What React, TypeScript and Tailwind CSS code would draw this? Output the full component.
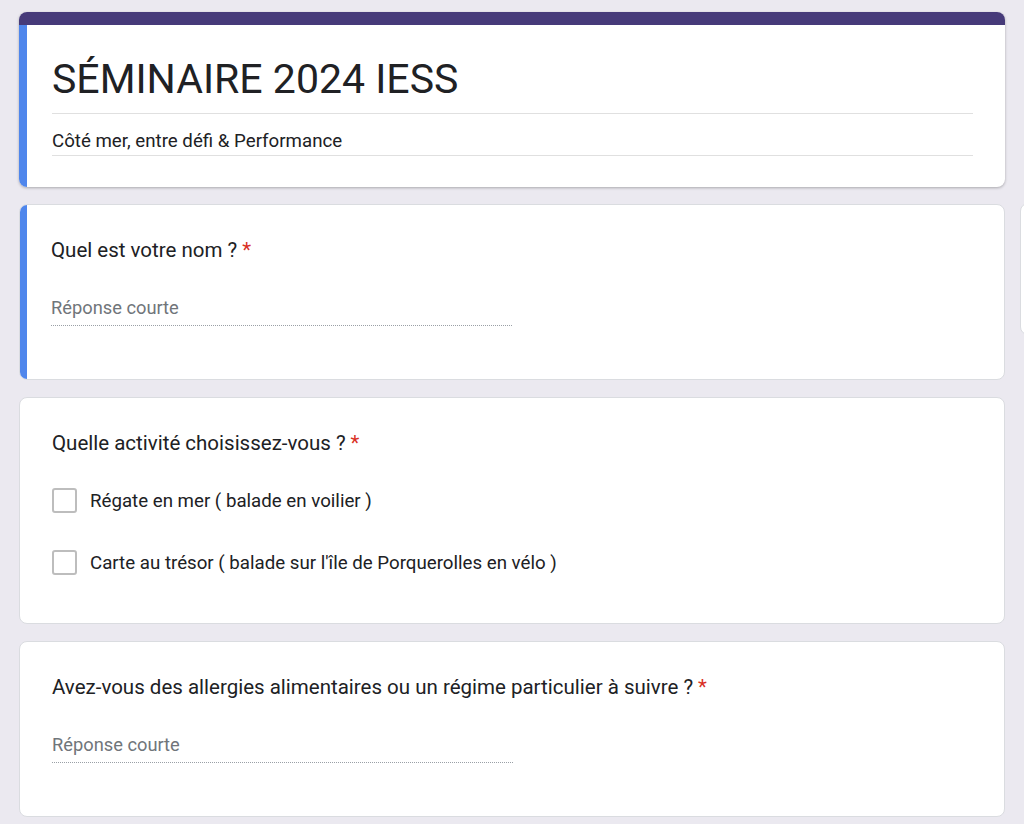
import React from "react";

function Required() {
  return <span className="ml-[5px] text-[#d93025]">*</span>;
}

function ShortAnswer() {
  return (
    <div className="mt-[34px] w-[461px] border-b border-dotted border-[#9aa0a6] pb-[5px] text-[18.3px] leading-[24px] text-[#70757a]">
      Réponse courte
    </div>
  );
}

function Question({ title, children, active }: { title: string; children: React.ReactNode; active?: boolean }) {
  return (
    <div className="flex overflow-hidden rounded-lg border border-[#dadce0] bg-white">
      {active && <div className="-my-px -ml-px w-[8px] shrink-0 bg-[#4f86ec]" />}
      <div className={active ? "flex-1 pl-[24px] pr-[32px] pt-[33px] pb-[53px]" : "flex-1 pl-[32px] pr-[32px] pt-[33px] pb-[53px]"}>
        <div className="text-[20.5px] leading-[24px] text-[#202124]">
          {title}
          <Required />
        </div>
        {children}
      </div>
    </div>
  );
}

function Option({ label }: { label: string }) {
  return (
    <div className="flex items-center gap-[13px]">
      <div className="h-[25px] w-[25px] rounded-[3px] border-2 border-[#bdbdbd]" />
      <span className="text-[18.7px] leading-[24px] text-[#202124]">{label}</span>
    </div>
  );
}

export default function App() {
  return (
    <div className="relative min-h-screen bg-[#ebe9f0] px-[19px] pt-[12px] pb-[9px] font-['Roboto',sans-serif]">
      <div className="flex flex-col gap-[17px]">
        {/* en-tête */}
        <div className="overflow-hidden rounded-lg bg-white shadow-[0_1px_3px_rgba(0,0,0,0.28)]">
          <div className="h-[13px] bg-[#463a79]" />
          <div className="flex">
            <div className="w-[8px] shrink-0 bg-[#4f86ec]" />
            <div className="flex-1 pl-[25px] pr-[32px] pt-[28px] pb-[31px]">
              <h1 className="border-b border-[#e0e0e0] pb-[8px] text-[41px] leading-[52px] text-[#202124]">
                SÉMINAIRE 2024 IESS
              </h1>
              <p className="mt-[15px] border-b border-[#e0e0e0] pb-[2px] text-[18.7px] leading-[24px] text-[#202124]">
                Côté mer, entre défi &amp; Performance
              </p>
            </div>
          </div>
        </div>

        <Question title="Quel est votre nom ?" active>
          <ShortAnswer />
        </Question>

        <div className="rounded-lg border border-[#dadce0] bg-white pl-[32px] pr-[32px] pt-[33px] pb-[48px]">
          <div className="text-[20.5px] leading-[24px] text-[#202124]">
            Quelle activité choisissez-vous ?
            <Required />
          </div>
          <div className="mt-[33px] flex flex-col gap-[37px]">
            <Option label="Régate en mer ( balade en voilier )" />
            <Option label="Carte au trésor ( balade sur l'île de Porquerolles en vélo )" />
          </div>
        </div>

        <Question title="Avez-vous des allergies alimentaires ou un régime particulier à suivre ?">
          <ShortAnswer />
        </Question>
      </div>

      {/* barre d'outils flottante, coupée au bord */}
      <div className="absolute left-[1020px] top-[203px] h-[132px] w-[24px] rounded-l-lg border border-[#dadce0] bg-white" />
    </div>
  );
}
